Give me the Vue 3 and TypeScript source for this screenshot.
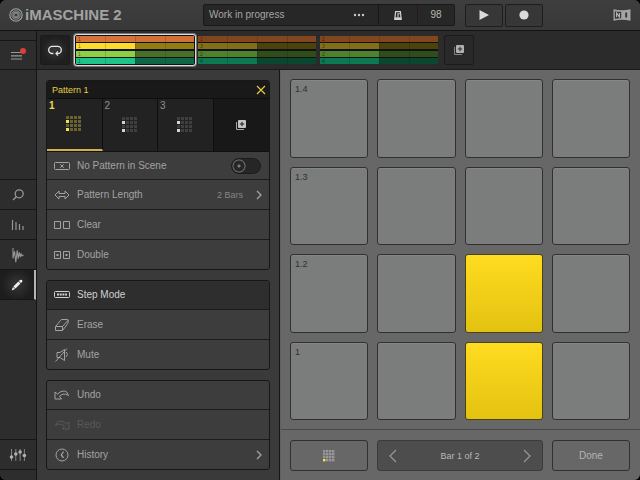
<script setup lang="ts">
import { ref, computed } from 'vue'

interface Scene { id: number; numbers: string[] }
interface Action { id: string; label: string; value?: string; arrow?: boolean; active?: boolean; disabled?: boolean }

const scenes: Scene[] = [
  { id: 1, numbers: ['1', '1', '1', '1'] },
  { id: 2, numbers: ['1', '3', '2', '4'] },
  { id: 3, numbers: ['2', '3', '2', '4'] },
]
const tracks = ['orange', 'yellow', 'green', 'teal']
const activeScene = ref(1)
const activePattern = ref(1)
const muted = ref(false)
const bar = ref(1)

const patternActions: Action[] = [
  { id: 'length', label: 'Pattern Length', value: '2 Bars', arrow: true },
  { id: 'clear', label: 'Clear' },
  { id: 'double', label: 'Double' },
]
const actionGroups: Action[][] = [
  [
    { id: 'step', label: 'Step Mode', active: true },
    { id: 'erase', label: 'Erase' },
    { id: 'mute', label: 'Mute' },
  ],
  [
    { id: 'undo', label: 'Undo' },
    { id: 'redo', label: 'Redo', disabled: true },
    { id: 'history', label: 'History', arrow: true },
  ],
]
const allGroups = computed(() => [patternActions, ...actionGroups])

const padLabels: Record<number, string> = { 0: '1.4', 4: '1.3', 8: '1.2', 12: '1' }
const lit = ref(new Set<number>([10, 14]))
function togglePad(i: number) {
  const next = new Set(lit.value)
  if (next.has(i)) next.delete(i)
  else next.add(i)
  lit.value = next
}
const cells = Array.from({ length: 16 }, (_, i) => ({ i, x: (i % 4) * 4, y: Math.floor(i / 4) * 4 }))
</script>

<template>
  <div class="app">
    <header class="top">
      <h1 class="brand">
        <svg width="14" height="14" viewBox="0 0 14 14" fill="none" stroke="currentColor" aria-hidden="true">
          <circle cx="7" cy="7" r="6.2" stroke-width="1.1" />
          <circle cx="7" cy="7" r="4.2" stroke-width="0.9" />
          <rect x="4.9" y="4.9" width="4.2" height="4.2" rx="0.6" stroke-width="1.1" />
        </svg>
        <span>iMASCHINE 2</span>
      </h1>
      <div class="display">
        <button class="project" type="button">
          <span>Work in progress</span>
          <svg width="12" height="4" viewBox="0 0 12 4" fill="currentColor" aria-hidden="true">
            <circle cx="2" cy="2" r="1.2" /><circle cx="6" cy="2" r="1.2" /><circle cx="10" cy="2" r="1.2" />
          </svg>
        </button>
        <button class="metro" type="button" aria-label="Metronome">
          <svg width="8" height="9" viewBox="0 0 8 9" aria-hidden="true">
            <path d="M1.6 0.7H6.4L7.2 8.4H0.8Z" fill="none" stroke="currentColor" stroke-width="1.2" />
            <path d="M0.8 6.2H7.2V8.8H0.6Z" fill="currentColor" />
            <path d="M4 6V2.8H5.8" fill="none" stroke="currentColor" stroke-width="1.1" />
          </svg>
        </button>
        <button class="tempo" type="button" aria-label="Tempo">98</button>
      </div>
      <div class="transport">
        <button type="button" aria-label="Play">
          <svg width="12" height="12" viewBox="0 0 12 12" fill="currentColor" aria-hidden="true"><path d="M1.5 1L11 6L1.5 11Z" /></svg>
        </button>
        <button type="button" aria-label="Record">
          <svg width="12" height="12" viewBox="0 0 12 12" fill="currentColor" aria-hidden="true"><circle cx="6" cy="6" r="4.6" /></svg>
        </button>
      </div>
      <svg class="maker" width="18" height="14" viewBox="0 0 18 14" aria-hidden="true">
        <path d="M0.5 1.2Q5 2.2 9 2.2Q13 2.2 17.5 1.2V12.8Q13 11.8 9 11.8Q5 11.8 0.5 12.8Z" fill="#a4a4a4" />
        <path d="M1.8 3.2Q5 3.7 8.2 3.7V10.3Q5 10.3 1.8 10.8Z" fill="#383838" />
        <path d="M3.6 9V5L6.4 9V5" fill="none" stroke="#b8b8b8" stroke-width="1.1" />
        <path d="M13.2 4.4V9.6" stroke="#303030" stroke-width="1.8" />
      </svg>
    </header>

    <nav class="rail" aria-label="Views">
      <button class="menu" type="button" aria-label="Menu">
        <svg width="20" height="16" viewBox="0 0 20 16" aria-hidden="true">
          <path d="M3 5.5H14M3 8.8H14M3 12H14" stroke="#9a9a9a" stroke-width="1.2" />
          <circle cx="15" cy="4" r="3" fill="#dc3d3b" />
        </svg>
      </button>
      <div class="rail-group">
        <button type="button" aria-label="Search">
          <svg width="18" height="16" viewBox="0 0 18 16" fill="none" stroke="currentColor" stroke-width="1.3" aria-hidden="true">
            <circle cx="10.2" cy="6.8" r="4" /><path d="M7.3 9.7L4 13" />
          </svg>
        </button>
        <button type="button" aria-label="Levels">
          <svg width="18" height="16" viewBox="0 0 18 16" stroke="currentColor" stroke-width="1.2" aria-hidden="true">
            <path d="M3.5 3V13M7 5V13M10.5 7V13M14 9V13" />
          </svg>
        </button>
        <button type="button" aria-label="Sample">
          <svg width="18" height="16" viewBox="0 0 18 16" fill="none" stroke="currentColor" stroke-width="1.1" stroke-linejoin="round" aria-hidden="true">
            <path d="M4 1V11L5.6 4.5L6.8 15L8.2 3.5L9.2 11.5L10.2 5.5L11.2 10L12 6.5L13 9L14.5 8" />
          </svg>
        </button>
        <button class="current" type="button" aria-label="Edit">
          <svg width="18" height="16" viewBox="0 0 18 16" fill="currentColor" aria-hidden="true">
            <path d="M3.6 13.4L5 10L7.1 12Z" /><path d="M5.4 9.4L10.4 4.6L12.4 6.6L7.5 11.6Z" /><path d="M10.9 4.1L12.2 2.9Q13.2 2.3 14 3.1Q14.7 4 14.1 5L12.9 6.1Z" />
          </svg>
        </button>
      </div>
      <button class="mixer" type="button" aria-label="Mixer">
        <svg width="18" height="14" viewBox="0 0 18 14" aria-hidden="true">
          <path d="M2.5 1V13M6.8 1V13M11.1 1V13M15.4 1V13" stroke="#858585" stroke-width="1" />
          <g fill="#b0b0b0"><circle cx="2.5" cy="9" r="1.8" /><circle cx="6.8" cy="6" r="1.8" /><circle cx="11.1" cy="4" r="1.8" /><circle cx="15.4" cy="7.5" r="1.8" /></g>
        </svg>
      </button>
    </nav>

    <section class="scenes" aria-label="Scenes">
      <button class="square loop" type="button" aria-label="Loop">
        <svg width="16" height="14" viewBox="0 0 16 14" fill="none" stroke="currentColor" stroke-width="1.3" aria-hidden="true">
          <path d="M6.4 10.5H5.3A3.6 3.6 0 0 1 5.3 3.3H10.7A3.6 3.6 0 0 1 10.7 10.5H9.4" /><path d="M11 8.4L8.9 10.5L11 12.6" stroke-width="1.1" />
        </svg>
      </button>
      <div class="scene-list">
        <button
          v-for="s in scenes" :key="s.id" type="button" class="scene" :class="{ selected: activeScene === s.id }"
          :aria-label="'Scene ' + s.id" @click="activeScene = s.id"
        >
          <span v-for="(t, n) in tracks" :key="t" class="clip" :class="t">{{ s.numbers[n] }}</span>
        </button>
      </div>
      <button class="square" type="button" aria-label="Add scene">
        <svg width="12" height="12" viewBox="0 0 12 12" aria-hidden="true">
          <path d="M1.5 3V10.5H9" fill="none" stroke="#858585" stroke-width="1" />
          <rect x="3" y="1" width="8" height="8" rx="1" fill="#b0b0b0" /><path d="M7 2.8V7.2M4.8 5H9.2" stroke="#2a2a2a" stroke-width="1" />
        </svg>
      </button>
    </section>

    <aside class="side">
      <section v-for="(group, g) in allGroups" :key="g" class="card">
        <template v-if="g === 0">
          <div class="card-head">
            <h2>Pattern {{ activePattern }}</h2>
            <button type="button" aria-label="Close">
              <svg width="10" height="10" viewBox="0 0 10 10" stroke="currentColor" stroke-width="1.1" aria-hidden="true"><path d="M1 1L9 9M9 1L1 9" /></svg>
            </button>
          </div>
          <div class="tiles">
            <button
              v-for="p in 3" :key="p" type="button" class="tile" :class="{ selected: activePattern === p }"
              @click="activePattern = p"
            >
              <span>{{ p }}</span>
              <svg width="16" height="16" viewBox="0 0 16 16" fill="currentColor" aria-hidden="true">
                <rect v-for="c in cells" :key="c.i" :x="c.x" :y="c.y" width="3" height="3" :class="c.i === 4 || c.i === 12 ? 'on' : 'off'" />
              </svg>
            </button>
            <button type="button" class="tile add" aria-label="Add pattern">
              <svg width="12" height="12" viewBox="0 0 12 12" aria-hidden="true">
                <path d="M1.5 3V10.5H9" fill="none" stroke="#a5a5a5" stroke-width="1" />
                <rect x="3" y="1" width="8" height="8" rx="1" fill="#c5c5c5" /><path d="M7 2.8V7.2M4.8 5H9.2" stroke="#191919" stroke-width="1" />
              </svg>
            </button>
          </div>
          <label class="row">
            <svg class="ico" width="18" height="16" viewBox="0 0 18 16" fill="none" stroke="currentColor" aria-hidden="true">
              <rect x="1.5" y="4.5" width="15" height="7" rx="1" /><path d="M7.3 6.3L10.7 9.7M10.7 6.3L7.3 9.7" />
            </svg>
            <span class="label">No Pattern in Scene</span>
            <input v-model="muted" type="checkbox" class="switch" />
          </label>
        </template>
        <button
          v-for="a in group" :key="a.id" type="button" class="row" :class="{ active: a.active }" :disabled="a.disabled"
        >
          <svg class="ico" width="18" height="16" viewBox="0 0 18 16" fill="none" stroke="currentColor" stroke-linejoin="round" aria-hidden="true">
            <path v-if="a.id === 'length'" d="M2 8L6 4V6.5H12V4L16 8L12 12V9.5H6V12Z" />
            <path v-else-if="a.id === 'clear'" d="M1.5 4.5H7.5V11.5H1.5ZM10.5 4.5H16.5V11.5H10.5Z" />
            <template v-else-if="a.id === 'double'">
              <path d="M1.5 4.5H7.5V11.5H1.5ZM10.5 4.5H16.5V11.5H10.5Z" /><path d="M3.5 8H5.5M12.5 8H14.5" stroke-width="2" />
            </template>
            <template v-else-if="a.id === 'step'">
              <rect x="1.5" y="4.5" width="15" height="6" rx="1" /><path d="M4 7.5H14" stroke-width="2" stroke-dasharray="2 0.7" />
            </template>
            <path v-else-if="a.id === 'erase'" d="M2.5 9.5H9.5V13.5H2.5ZM2.5 9.5L7.5 3.5Q8 2.5 9 2.5H14.5Q15.5 2.5 15.3 3.5L14.8 6.5L9.5 13.5M9.5 9.5L15.3 3" />
            <path v-else-if="a.id === 'mute'" d="M4 5.5H7L11.5 2.5V13.5L7 10.5H4ZM2.5 14.5L14 1.5M13 5L14.5 7.5L13 10" />
            <path v-else-if="a.id === 'undo'" d="M2 12V5L4.5 7Q8 3.5 11.5 4Q14.5 4.5 15.5 8.5Q12.5 6.5 10 7.2Q8 7.7 6.5 9.2L8.5 12Z" />
            <path v-else-if="a.id === 'redo'" d="M16 12V5L13.5 7Q10 3.5 6.5 4Q3.5 4.5 2.5 8.5Q5.5 6.5 8 7.2Q10 7.7 11.5 9.2L9.5 12Z" />
            <template v-else>
              <circle cx="9" cy="8" r="6" /><path d="M10.5 4.5L8.3 8L10.5 10.8" stroke-width="1.3" />
            </template>
          </svg>
          <span class="label">{{ a.label }}</span>
          <span v-if="a.value" class="value">{{ a.value }}</span>
          <svg v-if="a.arrow" class="chev" width="6" height="10" viewBox="0 0 6 10" fill="none" stroke="currentColor" stroke-width="1.3" aria-hidden="true"><path d="M1 1L5 5L1 9" /></svg>
        </button>
      </section>
    </aside>

    <main class="stage">
      <div class="pads">
        <button
          v-for="i in 16" :key="i" type="button" class="pad" :class="{ lit: lit.has(i - 1) }"
          :aria-label="'Step ' + i" :aria-pressed="lit.has(i - 1)" @click="togglePad(i - 1)"
        >{{ padLabels[i - 1] }}</button>
      </div>
      <footer class="foot">
        <button class="outline" type="button" aria-label="Pad view">
          <svg width="12" height="12" viewBox="0 0 16 16" aria-hidden="true">
            <rect v-for="c in cells" :key="c.i" :x="c.x" :y="c.y" width="3.2" height="3.2" :fill="c.i === 12 ? '#f6e53a' : '#989898'" />
          </svg>
        </button>
        <div class="stepper">
          <button type="button" aria-label="Previous bar" @click="bar = 1">
            <svg width="8" height="14" viewBox="0 0 8 14" fill="none" stroke="currentColor" stroke-width="1.3" aria-hidden="true"><path d="M7 1L1 7L7 13" /></svg>
          </button>
          <span>Bar {{ bar }} of 2</span>
          <button type="button" aria-label="Next bar" @click="bar = 2">
            <svg width="8" height="14" viewBox="0 0 8 14" fill="none" stroke="currentColor" stroke-width="1.3" aria-hidden="true"><path d="M1 1L7 7L1 13" /></svg>
          </button>
        </div>
        <button class="outline" type="button">Done</button>
      </footer>
    </main>
  </div>
</template>

<style>
body { margin: 0; background: #000; }
</style>

<style scoped>
.app {
  display: grid;
  grid-template-columns: 37px minmax(243px, 2fr) minmax(360px, 3fr);
  grid-template-rows: 31px 39px 1fr;
  min-height: 100vh;
  border-radius: 6px;
  overflow: hidden;
  background: #3b3b3b;
  color: #a9a9a9;
  font: 10px/14px "Liberation Sans", Arial, sans-serif;
}
.app *, .app { box-sizing: border-box; }
button { margin: 0; padding: 0; border: 0; background: none; color: inherit; font: inherit; cursor: pointer; }
svg { display: block; flex: none; }
h1, h2 { margin: 0; }

.top {
  grid-column: 1 / -1;
  display: grid;
  grid-template-columns: minmax(184px, 2fr) 252px 78px minmax(0, 1fr);
  gap: 10px;
  align-items: center;
  padding: 0 9px;
  border-bottom: 1px solid #131313;
  background: linear-gradient(#3e3e3e, #383838);
}
.brand { display: flex; align-items: center; gap: 2px; color: #a2a2a2; font-size: 15px; line-height: 20px; white-space: nowrap; }
.display { display: flex; height: 22px; border: 1px solid #191919; border-radius: 2px; background: #272727; }
.project { flex: 1; display: flex; align-items: center; justify-content: space-between; padding: 0 13px 0 5px; color: #a6a6a6; }
.project svg { color: #c8c8c8; }
.metro, .tempo { display: grid; place-items: center; width: 39px; border-left: 1px solid #171717; color: #d0d0d0; }
.tempo { width: 37px; border-left-color: #1d1d1d; color: #b8b8b8; }
.transport { display: flex; gap: 2px; }
.transport button { flex: 1; display: grid; place-items: center; height: 23px; border: 1px solid #1e1e1e; border-radius: 2px; background: #373737; color: #dadada; }
.maker { justify-self: end; }

.rail {
  grid-row: 2 / -1;
  display: flex;
  flex-direction: column;
  padding: 9px 0 10px;
  border-right: 1px solid #141414;
  background: #2d2d2d;
}
.rail button { display: grid; place-items: center; width: 100%; height: 30px; border-bottom: 1px solid #161616; color: #969696; }
.rail .menu { border-top: 1px solid #161616; }
.rail-group { margin: 109px 0 auto; border-top: 1px solid #161616; }
.rail .current { border-right: 2px solid #b5b5b5; background: radial-gradient(circle, #363636, #1d1d1d 70%); color: #f2f2f2; }
.rail .mixer { height: 31px; border-top: 1px solid #161616; }

.scenes {
  grid-column: 2 / -1;
  display: flex;
  align-items: center;
  gap: 4px;
  padding: 0 3px;
  border-bottom: 1px solid #1a1a1a;
  background: #2b2b2b;
}
.square { display: grid; place-items: center; width: 30px; height: 30px; border: 1px solid #1b1b1b; border-radius: 2px; background: #292929; }
.loop { background: radial-gradient(circle, #393939, #1f1f1f 65%); color: #e8e8e8; }
.scene-list { display: flex; }
.scene {
  display: grid;
  grid-template-rows: repeat(4, 6px);
  align-content: space-between;
  width: 122px;
  height: 32px;
  padding: 1px;
  border: 1px solid transparent;
  border-radius: 3px;
  background: #111 padding-box;
  color: rgba(0, 0, 0, 0.55);
  text-align: left;
  font-size: 5px;
  line-height: 6px;
}
.scene:not(.selected) { box-shadow: inset 0 0 0 1px #2b2b2b; }
.scene.selected { border-color: #dcdcdc; box-shadow: 0 0 0 1px #777; }
.clip {
  padding-left: 2px;
  background:
    repeating-linear-gradient(90deg, transparent 0 29px, rgba(0, 0, 0, 0.15) 29px 30px),
    linear-gradient(90deg, var(--a) 50%, var(--b) 50%);
}
.orange { --a: #82461f; --b: #82461f; }
.yellow { --a: #827018; --b: #4b420c; }
.green { --a: #4e822e; --b: #2e4d18; }
.teal { --a: #0d7854; --b: #0b4630; }
.selected .orange { --a: #d5743a; --b: #cf7037; }
.selected .yellow { --a: #fcdb2c; --b: #917d12; }
.selected .green { --a: #8ecf48; --b: #496f29; }
.selected .teal { --a: #1dc389; --b: #0f6646; }

.side {
  display: flex;
  flex-direction: column;
  gap: 10px;
  padding: 10px 9px;
  border-right: 1px solid #161616;
  background: #3a3a3a;
}
.card { border: 1px solid #171717; border-radius: 3px; background: #3d3d3d; overflow: hidden; }
.card-head { display: flex; align-items: center; justify-content: space-between; height: 18px; padding: 0 3px 0 5px; border-bottom: 1px solid #0e0e0e; background: #191919; color: #e5cf45; }
.card-head h2 { font-size: 9px; line-height: 12px; font-weight: 400; }
.tiles { display: grid; grid-template-columns: repeat(4, 1fr); height: 52px; }
.tile { position: relative; display: grid; place-items: center; border-right: 1px solid #0e0e0e; background: #222; color: #d5d5d5; }
.tile span { position: absolute; top: 0; left: 2px; color: #8f8f8f; }
.tile.selected { border-bottom: 2px solid #d2b04f; color: #f7e04b; }
.tile.selected span { color: #f0d94b; font-weight: 700; }
.tile.add { border-right: 0; background: #181818; }
.off { opacity: 0.16; }
.selected .off { opacity: 0.34; }
.row {
  display: flex;
  align-items: center;
  width: 100%;
  height: 30px;
  padding: 0 6px;
  border-top: 1px solid #1b1b1b;
  color: #a3a3a3;
  text-align: left;
}
.card > .row:first-child, label.row { height: 28px; }
.card > .row:first-child { border-top: 0; }
label.row { border-top-color: #111; }
.label { flex: 1; padding-left: 6px; }
.value { color: #858585; font-size: 9px; }
.chev { margin-left: 13px; margin-right: 1px; }
.row.active { background: #2e2e2e; color: #d0d0d0; }
.row:disabled { color: #595959; }
.switch {
  appearance: none;
  width: 30px;
  height: 16px;
  margin: 0 2px 0 0;
  border: 1px solid #1c1c1c;
  border-radius: 8px;
  background: radial-gradient(circle at 7px 7px, #7c7c7c 1px, #262626 2px 5px, #707070 6px, #262626 7px);
}
.switch:checked { background: radial-gradient(circle at 21px 7px, #eee 1px, #262626 2px 5px, #ccc 6px, #555 7px); }

.stage { display: flex; flex-direction: column; border-left: 1px solid #616161; background: #676767; }
.pads {
  flex: 1;
  display: grid;
  grid-template-columns: repeat(4, 1fr);
  grid-template-rows: repeat(4, minmax(60px, 1fr));
  gap: 9px;
  padding: 9px 10px 9px 9px;
}
.pad {
  display: flex;
  align-items: flex-start;
  padding: 3px 4px;
  border: 1px solid #303030;
  border-radius: 3px;
  background: #7b7c7c;
  box-shadow: inset 0 1px #858585;
  color: #303030;
  font-size: 9px;
  line-height: 12px;
}
.pad.lit { border-color: #4b4316; background: linear-gradient(#ffdc20, #e3c211); box-shadow: none; }
.foot {
  display: grid;
  grid-template-columns: repeat(4, 1fr);
  gap: 9px;
  padding: 10px 10px 9px 9px;
  border-top: 1px solid #494949;
}
.outline { display: grid; place-items: center; height: 31px; border: 1px solid #303030; border-radius: 3px; color: #b4b4b4; }
.stepper {
  grid-column: span 2;
  display: flex;
  align-items: center;
  justify-content: space-between;
  border: 1px solid #3b3b3b;
  border-radius: 3px;
  background: #4d4d4d;
  color: #b8b8b8;
  font-size: 9px;
}
.stepper button { display: grid; place-items: center; width: 30px; height: 29px; color: #979797; }
</style>
